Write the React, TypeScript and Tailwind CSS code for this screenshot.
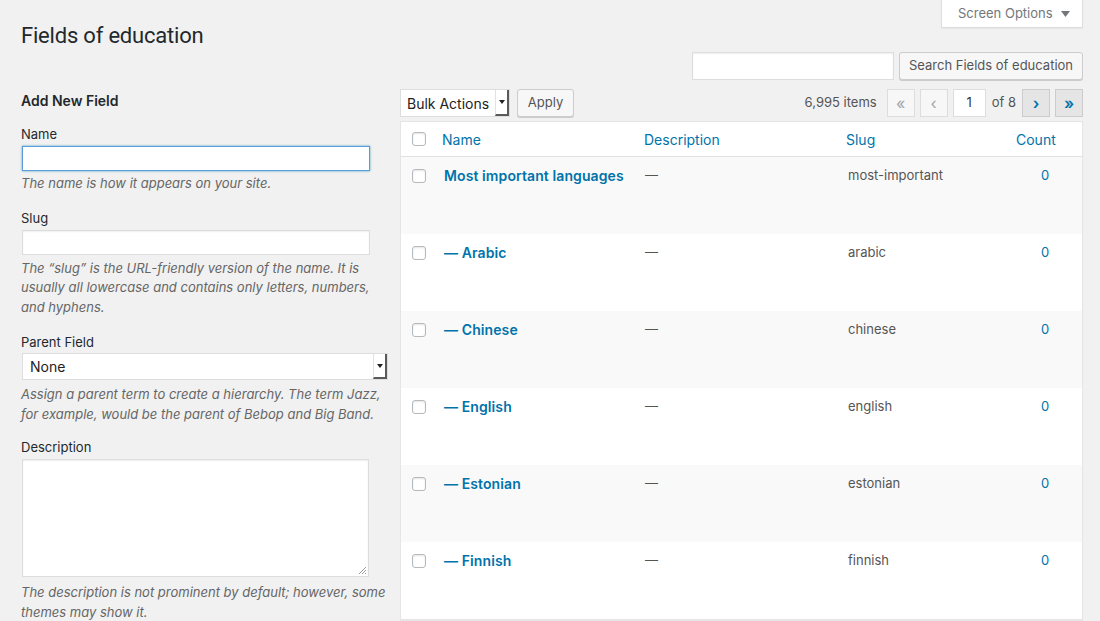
import React from "react";

const rows = [
  { name: "Most important languages", slug: "most-important" },
  { name: "— Arabic", slug: "arabic" },
  { name: "— Chinese", slug: "chinese" },
  { name: "— English", slug: "english" },
  { name: "— Estonian", slug: "estonian" },
  { name: "— Finnish", slug: "finnish" },
];

function Checkbox() {
  return (
    <div className="w-[14px] h-[14px] bg-white border border-[#b4b9be] rounded-[3px] shadow-[inset_0_1px_2px_rgba(0,0,0,0.1)]" />
  );
}

function SelectArrow() {
  return (
    <div className="h-full w-[14px] flex items-center justify-center bg-white border-l border-[#e2e2e2] border-r-2 border-b-2 border-r-[#5a5a5a] border-b-[#5a5a5a]">
      <svg width="6" height="4" viewBox="0 0 6 4">
        <path d="M0 0 L6 0 L3 4 Z" fill="#222" />
      </svg>
    </div>
  );
}

export default function App() {
  return (
    <div className="w-[1100px] h-[621px] overflow-hidden bg-[#f1f1f1] text-[#444] font-['Inter','Liberation_Sans',sans-serif] text-[13px]">
      {/* header */}
      <div className="flex justify-between items-start pl-[21px] pr-[17px]">
        <h1 className="pt-[21px] text-[22px] leading-[29px] text-[#23282d] font-normal tracking-[-0.2px] font-['Roboto','Inter',sans-serif]">
          Fields of education
        </h1>
        <div className="w-[142px] h-[28px] bg-white border-x border-b border-[#ddd] shadow-[0_1px_1px_rgba(0,0,0,0.04)] flex items-center pl-[16px] gap-[8px] text-[#72777c] text-[13px]">
          <span>Screen Options</span>
          <svg width="9" height="6" viewBox="0 0 9 6">
            <path d="M0 0 L9 0 L4.5 6 Z" fill="#72777c" />
          </svg>
        </div>
      </div>

      {/* search */}
      <div className="flex justify-end gap-[5px] pr-[17px] mt-[2px]">
        <div className="w-[202px] h-[28px] bg-white border border-[#ddd] shadow-[inset_0_1px_2px_rgba(0,0,0,0.07)]" />
        <div className="w-[184px] h-[28px] bg-[#f7f7f7] border border-[#ccc] rounded-[3px] shadow-[0_1px_0_#ccc] flex items-center justify-center text-[#555] text-[13px]">
          Search Fields of education
        </div>
      </div>

      {/* columns */}
      <div className="flex gap-[12px] pl-[21px] pr-[17px] mt-[9px]">
        {/* left form */}
        <div className="w-[367px] shrink-0 flex flex-col">
          <h2 className="mt-[2px] text-[14px] leading-[20px] font-semibold text-[#23282d]">Add New Field</h2>

          <label className="mt-[13px] leading-[20px] text-[#23282d]">Name</label>
          <div className="mt-[2px] ml-[1px] w-[348px] h-[25px] bg-white border border-[#5b9dd9] shadow-[0_0_2px_rgba(30,140,190,0.8)]" />
          <p className="mt-[3px] leading-[19.5px] italic text-[#666]">The name is how it appears on your site.</p>

          <label className="mt-[14px] leading-[20px] text-[#23282d]">Slug</label>
          <div className="mt-[2px] ml-[1px] w-[348px] h-[25px] bg-white border border-[#ddd] shadow-[inset_0_1px_2px_rgba(0,0,0,0.07)]" />
          <p className="mt-[4px] leading-[19.5px] italic text-[#666] pr-[8px]">
            The “slug” is the URL-friendly version of the name. It is usually all lowercase and contains only letters, numbers, and hyphens.
          </p>

          <label className="mt-[15px] leading-[20px] text-[#23282d]">Parent Field</label>
          <div className="mt-[1px] ml-[1px] w-[366px] h-[27px] bg-white border border-[#ddd] flex items-center">
            <span className="flex-1 pl-[7px] text-[14px] text-[#222]">None</span>
            <SelectArrow />
          </div>
          <p className="mt-[5px] leading-[19.5px] italic text-[#666]">
            Assign a parent term to create a hierarchy. The term Jazz, for example, would be the parent of Bebop and Big Band.
          </p>

          <label className="mt-[13px] leading-[20px] text-[#23282d]">Description</label>
          <div className="relative mt-[2px] ml-[1px] w-[347px] h-[118px] bg-white border border-[#ddd] shadow-[inset_0_1px_2px_rgba(0,0,0,0.07)]">
            <svg className="absolute right-[1px] bottom-[1px]" width="9" height="9" viewBox="0 0 9 9">
              <path d="M8 1 L1 8 M8 4 L4 8 M8 7 L7 8" stroke="#999" strokeWidth="1" />
            </svg>
          </div>
          <p className="mt-[6px] leading-[19.5px] italic text-[#666]">
            The description is not prominent by default; however, some themes may show it.
          </p>
        </div>

        {/* right table */}
        <div className="w-[683px] shrink-0 flex flex-col">
          <div className="flex items-center justify-between h-[28px]">
            <div className="flex items-center gap-[7px]">
              <div className="w-[110px] h-[28px] bg-white border border-[#ddd] flex items-center">
                <span className="flex-1 pl-[6px] text-[14px] text-[#222]">Bulk Actions</span>
                <SelectArrow />
              </div>
              <div className="w-[57px] h-[28px] bg-[#f7f7f7] border border-[#ccc] rounded-[3px] shadow-[0_1px_0_#ccc] flex items-center justify-center text-[#555] text-[13px]">
                Apply
              </div>
            </div>
            <div className="flex items-center text-[13px] text-[#555]">
              <span className="mr-[10px]">6,995 items</span>
              <div className="w-[28px] h-[28px] border border-[#ddd] bg-[#f7f7f7] flex items-center justify-center text-[#a0a5aa] text-[16px]">«</div>
              <div className="ml-[5px] w-[28px] h-[28px] border border-[#ddd] bg-[#f7f7f7] flex items-center justify-center text-[#a0a5aa] text-[16px]">‹</div>
              <div className="ml-[5px] w-[33px] h-[28px] border border-[#ddd] bg-white flex items-center justify-center text-[#32373c] text-[13px]">1</div>
              <span className="ml-[6px] mr-[6px]">of 8</span>
              <div className="w-[28px] h-[28px] border border-[#ccc] bg-[#e5e5e5] flex items-center justify-center text-[#0073aa] text-[16px] font-semibold">›</div>
              <div className="ml-[5px] w-[28px] h-[28px] border border-[#ccc] bg-[#e5e5e5] flex items-center justify-center text-[#0073aa] text-[16px] font-semibold">»</div>
            </div>
          </div>

          <div className="mt-[4px] bg-white border border-[#e5e5e5] shadow-[0_1px_1px_rgba(0,0,0,0.04)]">
            <div className="grid grid-cols-[31px_202px_202px_156px_90px] h-[35px] items-center border-b border-[#e1e1e1] text-[14px] text-[#0073aa]">
              <div className="pl-[11px]"><Checkbox /></div>
              <div className="pl-[10px]">Name</div>
              <div className="pl-[10px]">Description</div>
              <div className="pl-[10px]">Slug</div>
              <div className="pl-[24px]">Count</div>
            </div>
            {rows.map((r, i) => (
              <div
                key={r.slug}
                className={`grid grid-cols-[31px_202px_202px_156px_90px] h-[77px] items-start ${i % 2 === 0 ? "bg-[#f9f9f9]" : "bg-white"}`}
              >
                <div className="pl-[11px] pt-[12px]"><Checkbox /></div>
                <div className="pl-[12px] pt-[9px] leading-[20px] text-[14px] font-semibold text-[#0073aa] tracking-[0.1px]">{r.name}</div>
                <div className="pl-[11px] pt-[8px] leading-[20px] text-[#555]">—</div>
                <div className="pl-[12px] pt-[8px] leading-[20px] text-[#555]">{r.slug}</div>
                <div className="pl-[49px] pt-[8px] leading-[20px] text-[#0073aa]">0</div>
              </div>
            ))}
          </div>
        </div>
      </div>
    </div>
  );
}
